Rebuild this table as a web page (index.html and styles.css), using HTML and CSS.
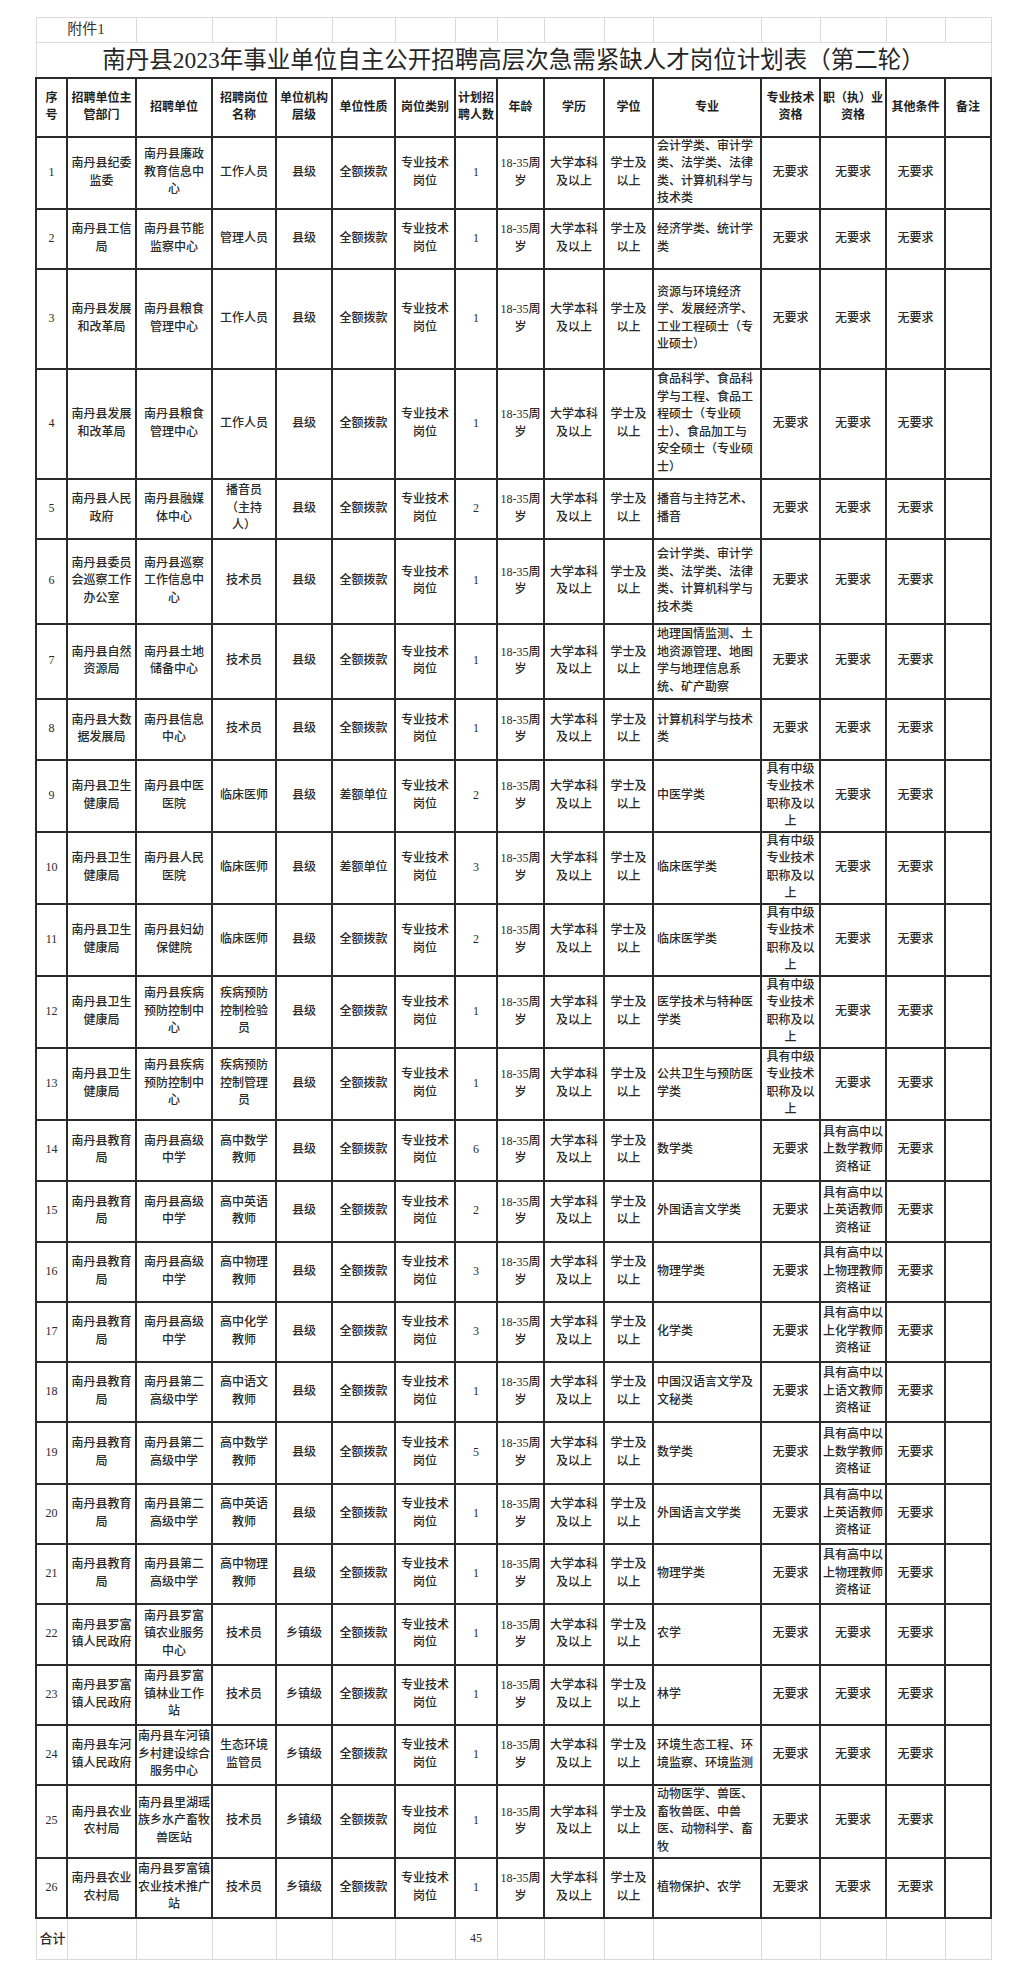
FILE: index.html
```html
<!DOCTYPE html>
<html lang="zh-CN">
<head>
<meta charset="utf-8">
<title>南丹县2023年事业单位自主公开招聘高层次急需紧缺人才岗位计划表（第二轮）</title>
<link rel="stylesheet" href="styles.css">
</head>
<body>
<div class="page">
<table class="sheet">
<colgroup>
<col class="c1"><col class="c2"><col class="c3"><col class="c4"><col class="c5"><col class="c6"><col class="c7"><col class="c8">
<col class="c9"><col class="c10"><col class="c11"><col class="c12"><col class="c13"><col class="c14"><col class="c15"><col class="c16">
</colgroup>
<tbody class="top">
<tr class="h-att"><td colspan="2" class="att">附件1</td><td></td><td></td><td></td><td></td><td></td><td></td><td></td><td></td><td></td><td></td><td></td><td></td><td></td><td></td></tr>
<tr class="h-title"><td colspan="16" class="title">南丹县2023年事业单位自主公开招聘高层次急需紧缺人才岗位计划表（第二轮）</td></tr>
</tbody>
<tbody class="main">
<tr class="head h59">
<td>序<br>号</td><td>招聘单位主<br>管部门</td><td>招聘单位</td><td>招聘岗位<br>名称</td><td>单位机构<br>层级</td><td>单位性质</td><td>岗位类别</td><td>计划招<br>聘人数</td><td>年龄</td><td>学历</td><td>学位</td><td>专业</td><td>专业技术<br>资格</td><td>职（执）业<br>资格</td><td>其他条件</td><td>备注</td>
</tr>
<tr class="h72"><td>1</td><td>南丹县纪委<br>监委</td><td>南丹县廉政<br>教育信息中<br>心</td><td>工作人员</td><td>县级</td><td>全额拨款</td><td>专业技术<br>岗位</td><td>1</td><td>18-35周<br>岁</td><td>大学本科<br>及以上</td><td>学士及<br>以上</td><td class="major">会计学类、审计学<br>类、法学类、法律<br>类、计算机科学与<br>技术类</td><td>无要求</td><td>无要求</td><td>无要求</td><td></td></tr>
<tr class="h60"><td>2</td><td>南丹县工信<br>局</td><td>南丹县节能<br>监察中心</td><td>管理人员</td><td>县级</td><td>全额拨款</td><td>专业技术<br>岗位</td><td>1</td><td>18-35周<br>岁</td><td>大学本科<br>及以上</td><td>学士及<br>以上</td><td class="major">经济学类、统计学<br>类</td><td>无要求</td><td>无要求</td><td>无要求</td><td></td></tr>
<tr class="h100"><td>3</td><td>南丹县发展<br>和改革局</td><td>南丹县粮食<br>管理中心</td><td>工作人员</td><td>县级</td><td>全额拨款</td><td>专业技术<br>岗位</td><td>1</td><td>18-35周<br>岁</td><td>大学本科<br>及以上</td><td>学士及<br>以上</td><td class="major">资源与环境经济<br>学、发展经济学、<br>工业工程硕士（专<br>业硕士）</td><td>无要求</td><td>无要求</td><td>无要求</td><td></td></tr>
<tr class="h110"><td>4</td><td>南丹县发展<br>和改革局</td><td>南丹县粮食<br>管理中心</td><td>工作人员</td><td>县级</td><td>全额拨款</td><td>专业技术<br>岗位</td><td>1</td><td>18-35周<br>岁</td><td>大学本科<br>及以上</td><td>学士及<br>以上</td><td class="major">食品科学、食品科<br>学与工程、食品工<br>程硕士（专业硕<br>士）、食品加工与<br>安全硕士（专业硕<br>士）</td><td>无要求</td><td>无要求</td><td>无要求</td><td></td></tr>
<tr class="h60"><td>5</td><td>南丹县人民<br>政府</td><td>南丹县融媒<br>体中心</td><td>播音员<br>（主持<br>人）</td><td>县级</td><td>全额拨款</td><td>专业技术<br>岗位</td><td>2</td><td>18-35周<br>岁</td><td>大学本科<br>及以上</td><td>学士及<br>以上</td><td class="major">播音与主持艺术、<br>播音</td><td>无要求</td><td>无要求</td><td>无要求</td><td></td></tr>
<tr class="h85"><td>6</td><td>南丹县委员<br>会巡察工作<br>办公室</td><td>南丹县巡察<br>工作信息中<br>心</td><td>技术员</td><td>县级</td><td>全额拨款</td><td>专业技术<br>岗位</td><td>1</td><td>18-35周<br>岁</td><td>大学本科<br>及以上</td><td>学士及<br>以上</td><td class="major">会计学类、审计学<br>类、法学类、法律<br>类、计算机科学与<br>技术类</td><td>无要求</td><td>无要求</td><td>无要求</td><td></td></tr>
<tr class="h75"><td>7</td><td>南丹县自然<br>资源局</td><td>南丹县土地<br>储备中心</td><td>技术员</td><td>县级</td><td>全额拨款</td><td>专业技术<br>岗位</td><td>1</td><td>18-35周<br>岁</td><td>大学本科<br>及以上</td><td>学士及<br>以上</td><td class="major">地理国情监测、土<br>地资源管理、地图<br>学与地理信息系<br>统、矿产勘察</td><td>无要求</td><td>无要求</td><td>无要求</td><td></td></tr>
<tr class="h61"><td>8</td><td>南丹县大数<br>据发展局</td><td>南丹县信息<br>中心</td><td>技术员</td><td>县级</td><td>全额拨款</td><td>专业技术<br>岗位</td><td>1</td><td>18-35周<br>岁</td><td>大学本科<br>及以上</td><td>学士及<br>以上</td><td class="major">计算机科学与技术<br>类</td><td>无要求</td><td>无要求</td><td>无要求</td><td></td></tr>
<tr class="h71"><td>9</td><td>南丹县卫生<br>健康局</td><td>南丹县中医<br>医院</td><td>临床医师</td><td>县级</td><td>差额单位</td><td>专业技术<br>岗位</td><td>2</td><td>18-35周<br>岁</td><td>大学本科<br>及以上</td><td>学士及<br>以上</td><td class="major">中医学类</td><td>具有中级<br>专业技术<br>职称及以<br>上</td><td>无要求</td><td>无要求</td><td></td></tr>
<tr class="h72"><td>10</td><td>南丹县卫生<br>健康局</td><td>南丹县人民<br>医院</td><td>临床医师</td><td>县级</td><td>差额单位</td><td>专业技术<br>岗位</td><td>3</td><td>18-35周<br>岁</td><td>大学本科<br>及以上</td><td>学士及<br>以上</td><td class="major">临床医学类</td><td>具有中级<br>专业技术<br>职称及以<br>上</td><td>无要求</td><td>无要求</td><td></td></tr>
<tr class="h72"><td>11</td><td>南丹县卫生<br>健康局</td><td>南丹县妇幼<br>保健院</td><td>临床医师</td><td>县级</td><td>全额拨款</td><td>专业技术<br>岗位</td><td>2</td><td>18-35周<br>岁</td><td>大学本科<br>及以上</td><td>学士及<br>以上</td><td class="major">临床医学类</td><td>具有中级<br>专业技术<br>职称及以<br>上</td><td>无要求</td><td>无要求</td><td></td></tr>
<tr class="h72"><td>12</td><td>南丹县卫生<br>健康局</td><td>南丹县疾病<br>预防控制中<br>心</td><td>疾病预防<br>控制检验<br>员</td><td>县级</td><td>全额拨款</td><td>专业技术<br>岗位</td><td>1</td><td>18-35周<br>岁</td><td>大学本科<br>及以上</td><td>学士及<br>以上</td><td class="major">医学技术与特种医<br>学类</td><td>具有中级<br>专业技术<br>职称及以<br>上</td><td>无要求</td><td>无要求</td><td></td></tr>
<tr class="h71"><td>13</td><td>南丹县卫生<br>健康局</td><td>南丹县疾病<br>预防控制中<br>心</td><td>疾病预防<br>控制管理<br>员</td><td>县级</td><td>全额拨款</td><td>专业技术<br>岗位</td><td>1</td><td>18-35周<br>岁</td><td>大学本科<br>及以上</td><td>学士及<br>以上</td><td class="major">公共卫生与预防医<br>学类</td><td>具有中级<br>专业技术<br>职称及以<br>上</td><td>无要求</td><td>无要求</td><td></td></tr>
<tr class="h61"><td>14</td><td>南丹县教育<br>局</td><td>南丹县高级<br>中学</td><td>高中数学<br>教师</td><td>县级</td><td>全额拨款</td><td>专业技术<br>岗位</td><td>6</td><td>18-35周<br>岁</td><td>大学本科<br>及以上</td><td>学士及<br>以上</td><td class="major">数学类</td><td>无要求</td><td>具有高中以<br>上数学教师<br>资格证</td><td>无要求</td><td></td></tr>
<tr class="h61"><td>15</td><td>南丹县教育<br>局</td><td>南丹县高级<br>中学</td><td>高中英语<br>教师</td><td>县级</td><td>全额拨款</td><td>专业技术<br>岗位</td><td>2</td><td>18-35周<br>岁</td><td>大学本科<br>及以上</td><td>学士及<br>以上</td><td class="major">外国语言文学类</td><td>无要求</td><td>具有高中以<br>上英语教师<br>资格证</td><td>无要求</td><td></td></tr>
<tr class="h60"><td>16</td><td>南丹县教育<br>局</td><td>南丹县高级<br>中学</td><td>高中物理<br>教师</td><td>县级</td><td>全额拨款</td><td>专业技术<br>岗位</td><td>3</td><td>18-35周<br>岁</td><td>大学本科<br>及以上</td><td>学士及<br>以上</td><td class="major">物理学类</td><td>无要求</td><td>具有高中以<br>上物理教师<br>资格证</td><td>无要求</td><td></td></tr>
<tr class="h60"><td>17</td><td>南丹县教育<br>局</td><td>南丹县高级<br>中学</td><td>高中化学<br>教师</td><td>县级</td><td>全额拨款</td><td>专业技术<br>岗位</td><td>3</td><td>18-35周<br>岁</td><td>大学本科<br>及以上</td><td>学士及<br>以上</td><td class="major">化学类</td><td>无要求</td><td>具有高中以<br>上化学教师<br>资格证</td><td>无要求</td><td></td></tr>
<tr class="h60"><td>18</td><td>南丹县教育<br>局</td><td>南丹县第二<br>高级中学</td><td>高中语文<br>教师</td><td>县级</td><td>全额拨款</td><td>专业技术<br>岗位</td><td>1</td><td>18-35周<br>岁</td><td>大学本科<br>及以上</td><td>学士及<br>以上</td><td class="major">中国汉语言文学及<br>文秘类</td><td>无要求</td><td>具有高中以<br>上语文教师<br>资格证</td><td>无要求</td><td></td></tr>
<tr class="h62"><td>19</td><td>南丹县教育<br>局</td><td>南丹县第二<br>高级中学</td><td>高中数学<br>教师</td><td>县级</td><td>全额拨款</td><td>专业技术<br>岗位</td><td>5</td><td>18-35周<br>岁</td><td>大学本科<br>及以上</td><td>学士及<br>以上</td><td class="major">数学类</td><td>无要求</td><td>具有高中以<br>上数学教师<br>资格证</td><td>无要求</td><td></td></tr>
<tr class="h60"><td>20</td><td>南丹县教育<br>局</td><td>南丹县第二<br>高级中学</td><td>高中英语<br>教师</td><td>县级</td><td>全额拨款</td><td>专业技术<br>岗位</td><td>1</td><td>18-35周<br>岁</td><td>大学本科<br>及以上</td><td>学士及<br>以上</td><td class="major">外国语言文学类</td><td>无要求</td><td>具有高中以<br>上英语教师<br>资格证</td><td>无要求</td><td></td></tr>
<tr class="h60"><td>21</td><td>南丹县教育<br>局</td><td>南丹县第二<br>高级中学</td><td>高中物理<br>教师</td><td>县级</td><td>全额拨款</td><td>专业技术<br>岗位</td><td>1</td><td>18-35周<br>岁</td><td>大学本科<br>及以上</td><td>学士及<br>以上</td><td class="major">物理学类</td><td>无要求</td><td>具有高中以<br>上物理教师<br>资格证</td><td>无要求</td><td></td></tr>
<tr class="h61"><td>22</td><td>南丹县罗富<br>镇人民政府</td><td>南丹县罗富<br>镇农业服务<br>中心</td><td>技术员</td><td>乡镇级</td><td>全额拨款</td><td>专业技术<br>岗位</td><td>1</td><td>18-35周<br>岁</td><td>大学本科<br>及以上</td><td>学士及<br>以上</td><td class="major">农学</td><td>无要求</td><td>无要求</td><td>无要求</td><td></td></tr>
<tr class="h60"><td>23</td><td>南丹县罗富<br>镇人民政府</td><td>南丹县罗富<br>镇林业工作<br>站</td><td>技术员</td><td>乡镇级</td><td>全额拨款</td><td>专业技术<br>岗位</td><td>1</td><td>18-35周<br>岁</td><td>大学本科<br>及以上</td><td>学士及<br>以上</td><td class="major">林学</td><td>无要求</td><td>无要求</td><td>无要求</td><td></td></tr>
<tr class="h60"><td>24</td><td>南丹县车河<br>镇人民政府</td><td class="tight">南丹县车河镇<br>乡村建设综合<br>服务中心</td><td>生态环境<br>监管员</td><td>乡镇级</td><td>全额拨款</td><td>专业技术<br>岗位</td><td>1</td><td>18-35周<br>岁</td><td>大学本科<br>及以上</td><td>学士及<br>以上</td><td class="major">环境生态工程、环<br>境监察、环境监测</td><td>无要求</td><td>无要求</td><td>无要求</td><td></td></tr>
<tr class="h73"><td>25</td><td>南丹县农业<br>农村局</td><td class="tight">南丹县里湖瑶<br>族乡水产畜牧<br>兽医站</td><td>技术员</td><td>乡镇级</td><td>全额拨款</td><td>专业技术<br>岗位</td><td>1</td><td>18-35周<br>岁</td><td>大学本科<br>及以上</td><td>学士及<br>以上</td><td class="major">动物医学、兽医、<br>畜牧兽医、中兽<br>医、动物科学、畜<br>牧</td><td>无要求</td><td>无要求</td><td>无要求</td><td></td></tr>
<tr class="h60"><td>26</td><td>南丹县农业<br>农村局</td><td class="tight">南丹县罗富镇<br>农业技术推广<br>站</td><td>技术员</td><td>乡镇级</td><td>全额拨款</td><td>专业技术<br>岗位</td><td>1</td><td>18-35周<br>岁</td><td>大学本科<br>及以上</td><td>学士及<br>以上</td><td class="major">植物保护、农学</td><td>无要求</td><td>无要求</td><td>无要求</td><td></td></tr>
</tbody>
<tbody class="foot">
<tr class="h-total"><td class="total-label">合计</td><td></td><td></td><td></td><td></td><td></td><td></td><td>45</td><td></td><td></td><td></td><td></td><td></td><td></td><td></td><td></td></tr>
</tbody>
</table>
</div>
</body>
</html>
```

FILE: styles.css
```css
html, body {
  margin: 0;
  padding: 0;
  background: #ffffff;
}

body {
  font-family: "Liberation Serif", "Noto Sans CJK SC", serif;
  color: #2a2a2a;
}

.page {
  padding: 17px 0 0 35px;
}

.sheet {
  border-collapse: collapse;
  table-layout: fixed;
  width: 955px;
}

.c1 { width: 31px; }
.c2 { width: 69px; }
.c3 { width: 76px; }
.c4 { width: 64px; }
.c5 { width: 56px; }
.c6 { width: 63px; }
.c7 { width: 60px; }
.c8 { width: 42px; }
.c9 { width: 47px; }
.c10 { width: 60px; }
.c11 { width: 49px; }
.c12 { width: 108px; }
.c13 { width: 59px; }
.c14 { width: 66px; }
.c15 { width: 59px; }
.c16 { width: 46px; }

.sheet td {
  font-size: 12px;
  font-weight: 500;
  line-height: 17.5px;
  text-align: center;
  vertical-align: middle;
  white-space: nowrap;
  padding: 0 2px;
  overflow: visible;
}

.top td,
.foot td {
  border: 1px solid #dadada;
}

.main td {
  border: 2px solid #2a2a2a;
}

.h-att { height: 25px; }
.h-title { height: 35px; }

.sheet td.att {
  font-size: 15px;
  font-weight: 400;
  color: #333;
}

.sheet td.title {
  font-size: 23.5px;
  font-weight: 400;
  line-height: 30px;
  color: #262626;
}

.sheet .head td {
  font-weight: 700;
  color: #1f1f1f;
  line-height: 17px;
}

.sheet td.major {
  text-align: left;
  padding-left: 3px;
}

.sheet td.tight {
  padding: 0;
}

.h59 { height: 59px; }
.h60 { height: 60px; }
.h61 { height: 61px; }
.h62 { height: 62px; }
.h71 { height: 71px; }
.h72 { height: 72px; }
.h73 { height: 73px; }
.h75 { height: 75px; }
.h85 { height: 85px; }
.h100 { height: 100px; }
.h110 { height: 110px; }

.h-total { height: 42px; }

.sheet td.total-label {
  text-align: left;
  padding-left: 3px;
  font-size: 13px;
}
```
